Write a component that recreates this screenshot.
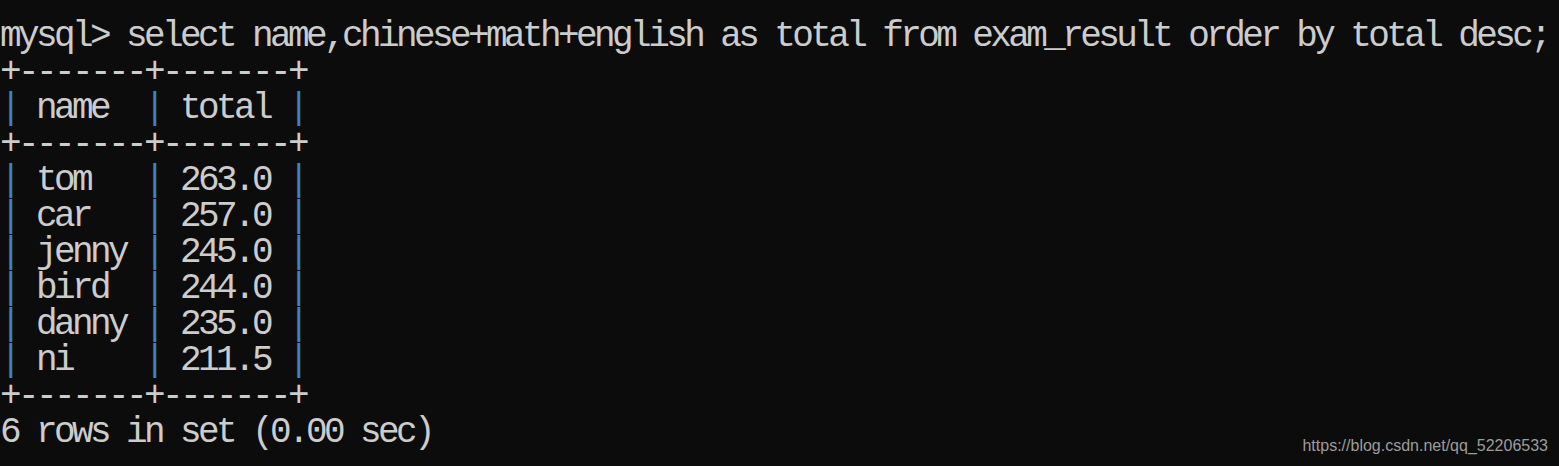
import React from "react";

const rows = [
  ["tom", "263.0"],
  ["car", "257.0"],
  ["jenny", "245.0"],
  ["bird", "244.0"],
  ["danny", "235.0"],
  ["ni", "211.5"],
];

const Bar = () => <span className="text-[#3b82c8]">|</span>;

const Sep = () => (
  <div>
    <span>+-------+-------+</span>
  </div>
);

const Row = ({ a, b }) => (
  <div>
    <Bar />
    {" " + a.padEnd(6, " ")}
    <Bar />
    {" " + b.padEnd(6, " ")}
    <Bar />
  </div>
);

export default function App() {
  return (
    <div className="relative h-[466px] w-full overflow-hidden bg-[#0c0c0c]">
      <pre className="pt-[19px] font-['Liberation_Mono',monospace] text-[36px] leading-[36px] tracking-[-3.6px] text-[#cccccc] whitespace-pre">
        <div>mysql&gt; select name,chinese+math+english as total from exam_result order by total desc;</div>
        <Sep />
        <Row a="name" b="total" />
        <Sep />
        {rows.map(([a, b]) => (
          <Row key={a} a={a} b={b} />
        ))}
        <Sep />
        <div>6 rows in set (0.00 sec)</div>
      </pre>
      {/* csdn watermark */}
      <div className="absolute right-[11px] bottom-[8px] font-['Liberation_Sans',sans-serif] text-[16px] text-[#9c9c9c]">
        https://blog.csdn.net/qq_52206533
      </div>
    </div>
  );
}
